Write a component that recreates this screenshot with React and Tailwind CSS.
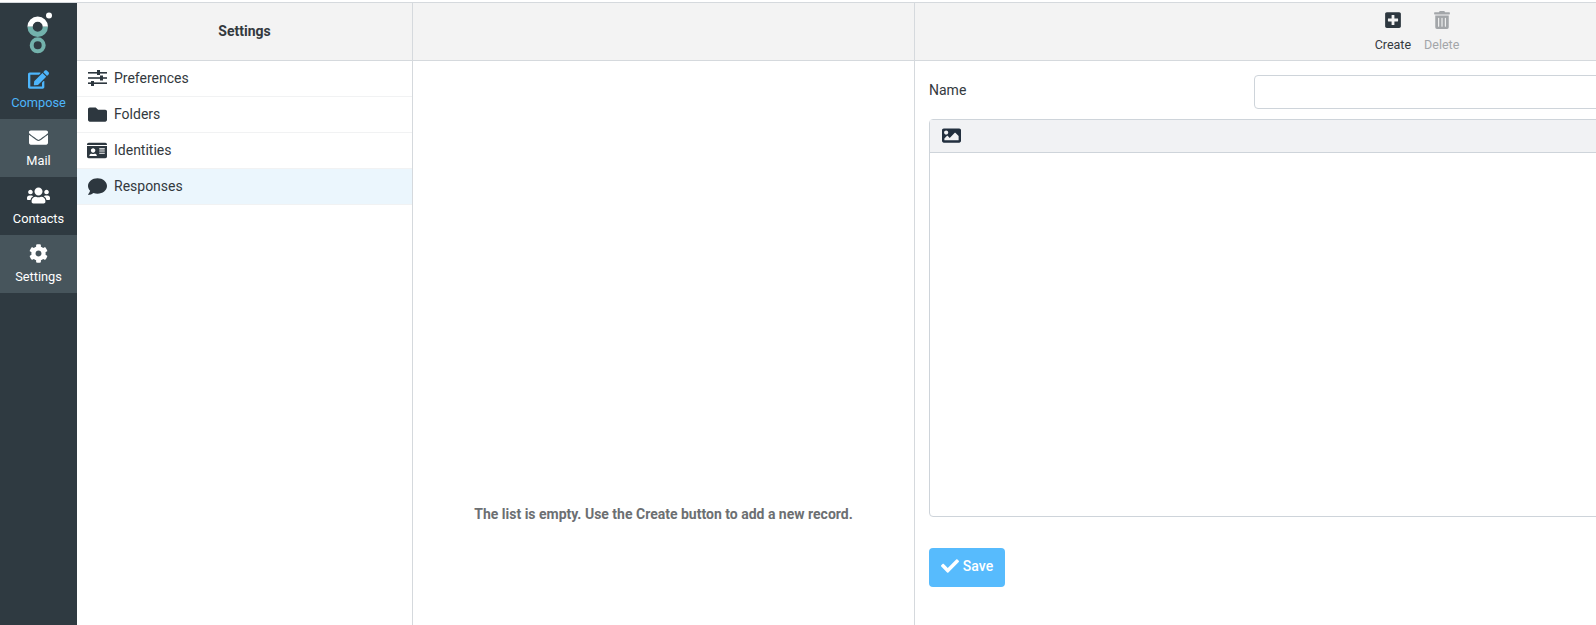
import React from 'react';
import { FaEdit, FaEnvelope, FaUsers, FaCog, FaFolder, FaIdCard, FaComment, FaPlusSquare, FaTrashAlt, FaImage, FaCheck } from 'react-icons/fa';

function Logo() {
    return (
        <svg width="28" height="44" viewBox="0 0 28 44">
            <circle cx="22" cy="4.6" r="3" fill="#fff" />
            <path d="M0.4 15.7a10.3 10.3 0 0 1 20.6 0h-5.3a5 5 0 0 0-10 0z" fill="#fff" />
            <path d="M0.4 15.7a10.3 10.3 0 0 0 20.6 0h-5.3a5 5 0 0 1-10 0z" fill="#73b2ac" />
            <circle cx="10.7" cy="34.3" r="6" fill="none" stroke="#73b2ac" strokeWidth="4" />
        </svg>
    );
}

function SlidersIcon() {
    return (
        <svg width="19" height="16" viewBox="0 0 19 16" fill="#2d373f">
            <rect x="0" y="2" width="19" height="1.6" />
            <rect x="9" y="0" width="3" height="5" />
            <rect x="0" y="7.2" width="19" height="1.6" />
            <rect x="12" y="5.5" width="3" height="5" />
            <rect x="0" y="12.4" width="19" height="1.6" />
            <rect x="3" y="11" width="3" height="5" />
        </svg>
    );
}

function NavItem({ icon: Icon, label, active, alt, size = 20 }) {
    return (
        <div className={`h-[58px] flex flex-col items-center pt-[6px] ${alt ? 'bg-[#47555c]' : ''} ${active ? 'text-[#4db5fb]' : 'text-white'}`}>
            <div className="h-[24px] flex items-center justify-center">
                <Icon size={size} />
            </div>
            <span className="text-[12.8px] leading-4 mt-[4px]">{label}</span>
        </div>
    );
}

function MenuItem({ icon, label, selected }) {
    return (
        <div className={`h-9 flex items-center gap-2 pl-[10px] pb-px border-b border-[#f1f2f3] text-sm text-[#33393e] ${selected ? 'bg-[#ebf6fd]' : ''}`}>
            <span className="w-[20px] flex justify-center text-[#2d373f]">{icon}</span>
            <span className="-ml-px">{label}</span>
        </div>
    );
}

export default function App() {
    return (
        <div className="h-[625px] w-[1596px] overflow-hidden bg-white flex flex-col font-['Roboto',sans-serif] text-[#33393e]">
            <div className="h-[2px] shrink-0 bg-white" />
            <div className="flex-1 flex border-t border-[#d5d9dd] min-h-0">
                {/* main nav */}
                <div className="w-[77px] bg-[#2f3a41] shrink-0">
                    <div className="h-[58px] pt-[8px] pl-[27px]">
                        <Logo />
                    </div>
                    <NavItem icon={FaEdit} label="Compose" active size={21} />
                    <NavItem icon={FaEnvelope} label="Mail" alt size={19} />
                    <NavItem icon={FaUsers} label="Contacts" size={23} />
                    <NavItem icon={FaCog} label="Settings" alt size={19} />
                </div>

                {/* settings menu */}
                <div className="w-[336px] shrink-0 flex flex-col border-r border-[#d5d9dd]">
                    <div className="h-[58px] shrink-0 pb-[2px] bg-[#f3f3f3] border-b border-[#d5d9dd] flex items-center justify-center text-sm font-bold">
                        Settings
                    </div>
                    <MenuItem icon={<SlidersIcon />} label="Preferences" />
                    <MenuItem icon={<FaFolder size={19} />} label="Folders" />
                    <MenuItem icon={<FaIdCard size={21} />} label="Identities" />
                    <MenuItem icon={<FaComment size={19} />} label="Responses" selected />
                </div>

                {/* list */}
                <div className="w-[502px] shrink-0 flex flex-col border-r border-[#d5d9dd]">
                    <div className="h-[58px] shrink-0 bg-[#f3f3f3] border-b border-[#d5d9dd]" />
                    <div className="flex-1 flex items-end justify-center pb-[101px] text-sm font-bold text-[#6c6f72]">
                        The list is empty. Use the Create button to add a new record.
                    </div>
                </div>

                {/* response form */}
                <div className="w-[1004px] shrink-0 flex flex-col">
                    <div className="h-[58px] shrink-0 bg-[#f3f3f3] border-b border-[#d5d9dd] flex justify-center gap-[13px] pt-[8px]">
                        <div className="flex flex-col items-center text-[12.5px] text-[#33393e]">
                            <FaPlusSquare size={18} className="text-[#2d373f]" />
                            <span className="mt-[8px] leading-4">Create</span>
                        </div>
                        <div className="flex flex-col items-center text-[12.5px] text-[#a3a6a9]">
                            <FaTrashAlt size={18} />
                            <span className="mt-[8px] leading-4">Delete</span>
                        </div>
                    </div>
                    <div className="pl-[14px] flex-1 w-[800px]">
                        <div className="flex items-center mt-[14px]">
                            <label className="w-[325px] shrink-0 text-sm pb-1">Name</label>
                            <input className="flex-1 h-[34px] border border-[#ced4da] rounded-[4px] bg-white" />
                        </div>
                        <div className="mt-[10px] h-[398px] border border-[#ced4da] rounded-[4px] flex flex-col">
                            <div className="h-[33px] pb-[2px] bg-[#f1f2f4] border-b border-[#ced4da] flex items-center pl-[12px] text-[#222f3e]">
                                <FaImage size={19} />
                            </div>
                        </div>
                        <button className="mt-[31px] h-[39px] w-[76px] pb-[3px] rounded-[4px] bg-[#57bbfd] text-white text-sm font-medium flex items-center justify-center gap-1">
                            <FaCheck size={18} />
                            Save
                        </button>
                    </div>
                </div>
            </div>
        </div>
    );
}
